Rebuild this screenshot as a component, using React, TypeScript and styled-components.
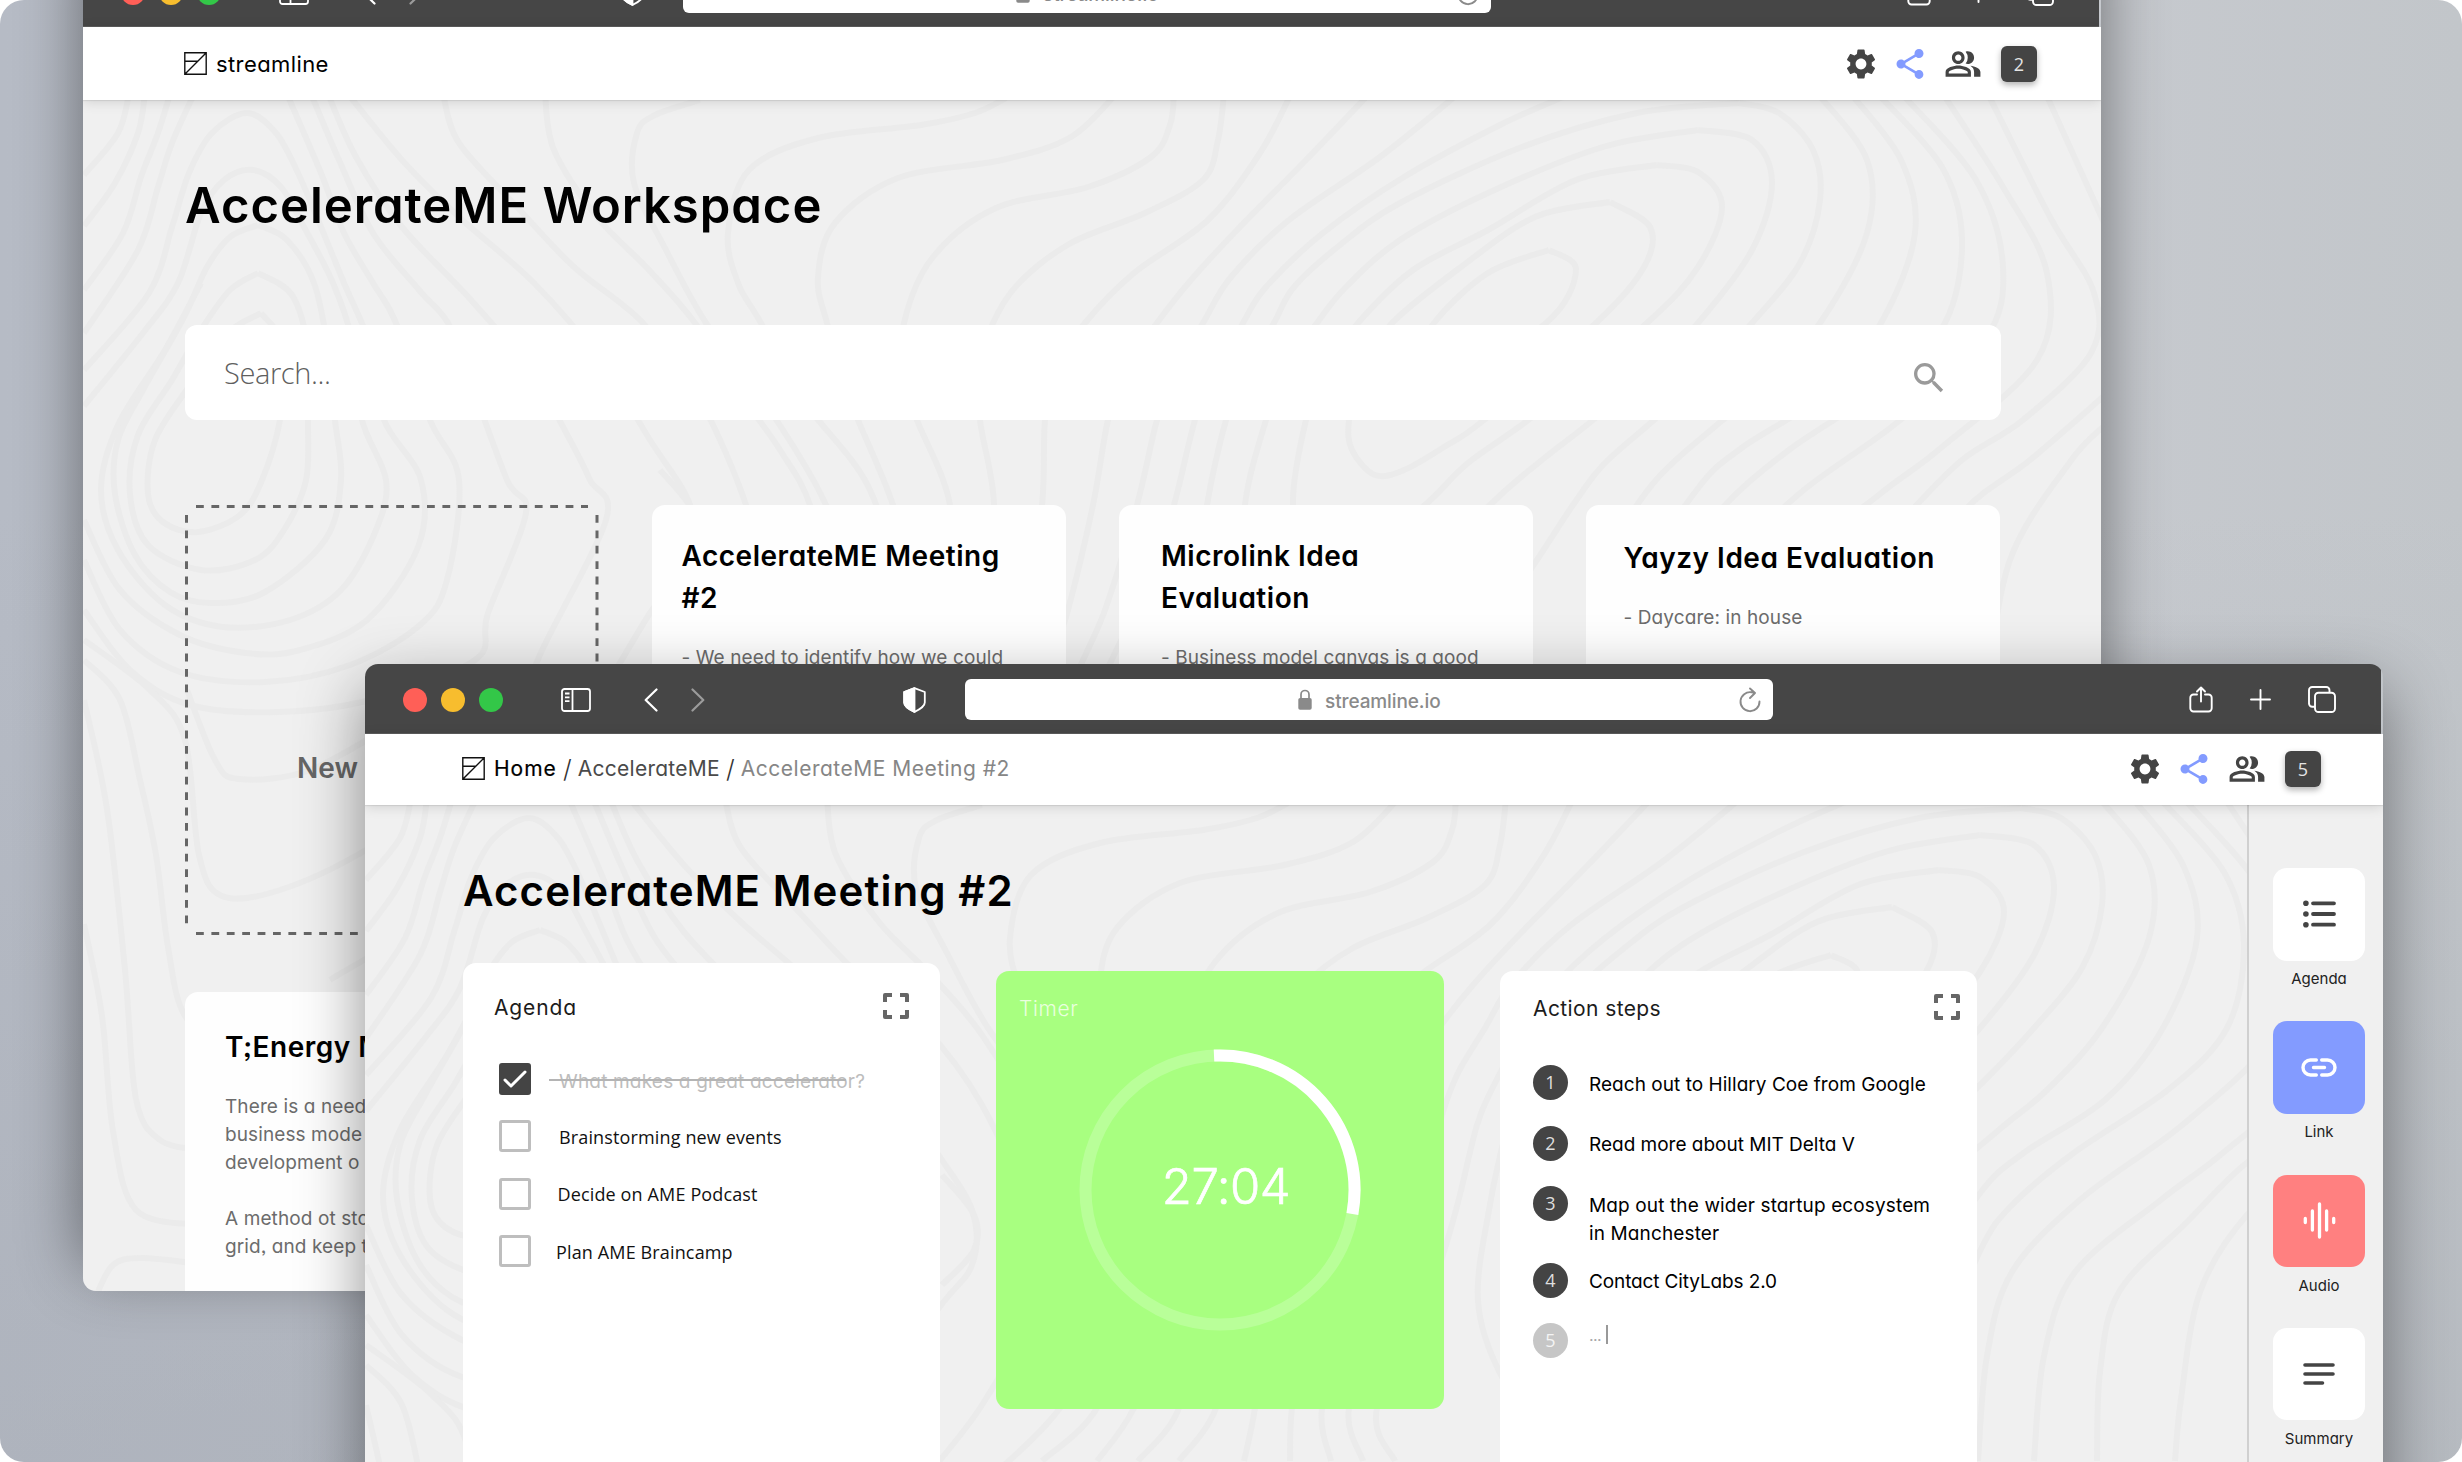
import React from "react";
import styled, { createGlobalStyle } from "styled-components";
import { MdSettings, MdShare, MdOutlinePeopleAlt, MdSearch } from "react-icons/md";

const ink = "#444444";
const canvas = "#f0f0f0";
const geometric = `Inter, "Open Sans", sans-serif`;
const humanist = `"Open Sans", "Noto Sans", sans-serif`;

const GlobalStyle = createGlobalStyle`
  body { margin: 0; background: #fff; }
  * { box-sizing: border-box; }
  h1, h2, h3, p, ul, ol { margin: 0; padding: 0; font-size: inherit; font-weight: inherit; }
  svg { display: block; flex: none; }
`;

/* ---------- desktop and windows ---------- */

const Desktop = styled.main`
  position: relative;
  width: 2462px;
  height: 1462px;
  overflow: hidden;
  border-radius: 24px;
  background:
    linear-gradient(180deg, transparent 35%, rgba(160, 165, 174, 0.35) 100%),
    linear-gradient(90deg, #b6bbc5 0%, #c6c9ce 86%, #c2c6ca 100%);
  font-family: ${geometric};
  font-feature-settings: "cv11", "ss03";
  color: #000;
`;

const WindowFrame = styled.section<{ $left: number; $top: number; $height: number; $shadow: string }>`
  position: absolute;
  left: ${(p) => p.$left}px;
  top: ${(p) => p.$top}px;
  width: 2018px;
  height: ${(p) => p.$height}px;
  display: flex;
  flex-direction: column;
  overflow: hidden;
  border-radius: 13px;
  box-shadow: ${(p) => p.$shadow};
`;

const Chrome = styled.div`
  flex: none;
  display: flex;
  align-items: center;
  width: 2016px;
  height: 70px;
  padding: 2px 0 0 38px;
  background: #464646;
  color: #fff;
  border-bottom: 1px solid #5c5c5c;
`;

const Lights = styled.div`
  display: flex;
  gap: 14px;
`;

const Light = styled.span<{ $color: string }>`
  width: 24px;
  height: 24px;
  border-radius: 50%;
  background: ${(p) => p.$color};
`;

const Glyph = styled.span<{ $before: number; $tone?: string }>`
  margin-left: ${(p) => p.$before}px;
  color: ${(p) => p.$tone ?? "#fff"};
`;

const AddressBar = styled.div`
  display: flex;
  align-items: center;
  width: 808px;
  height: 41px;
  margin-left: 39px;
  padding: 0 12px 0 333px;
  border-radius: 6px;
  background: #fff;
  color: #8a8a8a;
`;

const Address = styled.span`
  flex: 1;
  margin-left: 13px;
  padding-top: 3px;
  font-size: 19px;
  font-weight: 500;
  letter-spacing: -0.1px;
  font-feature-settings: normal;
`;

const AppHeader = styled.header<{ $height: number; $left: number; $right: number; $lift: number }>`
  position: relative;
  z-index: 1;
  flex: none;
  display: flex;
  align-items: center;
  height: ${(p) => p.$height}px;
  padding: 0 ${(p) => p.$right}px ${(p) => p.$lift}px ${(p) => p.$left}px;
  background: #fff;
  box-shadow: 0 2px 12px rgba(0, 0, 0, 0.13), 0 1px 1px rgba(0, 0, 0, 0.08);
`;

const BrandName = styled.span`
  flex: 1;
  margin-left: 9px;
  padding-top: 1px;
  font-size: 22px;
  letter-spacing: 0.4px;
`;

const Crumbs = styled.nav`
  flex: 1;
  display: flex;
  align-items: center;
  margin-left: 9px;
  padding-top: 1px;
  font-size: 21px;
  line-height: 30px;
`;

const Crumb = styled.span<{ $tone: string; $spacing?: number }>`
  color: ${(p) => p.$tone};
  letter-spacing: ${(p) => p.$spacing ?? 0.25}px;
`;

const HomeCrumb = styled(Crumb)`
  -webkit-text-stroke: 0.2px #000;
`;

const Slash = styled.span`
  width: 21px;
  text-align: center;
  font-size: 25px;
  font-weight: 300;
  color: #333;
`;

const Actions = styled.div`
  display: flex;
  align-items: center;
  color: ${ink};
`;

const Action = styled.span<{ $before?: number; $tone?: string }>`
  margin-left: ${(p) => p.$before ?? 0}px;
  color: ${(p) => p.$tone ?? ink};
`;

const CountBadge = styled.span`
  display: grid;
  place-items: center;
  width: 36px;
  height: 36px;
  margin-left: 19px;
  border-radius: 6px;
  background: ${ink};
  box-shadow: 0 3px 6px rgba(0, 0, 0, 0.3);
  color: #e4e4e4;
  font: 400 18px/36px ${humanist};
`;

const Body = styled.div`
  position: relative;
  flex: 1;
  min-height: 0;
  background: ${canvas};
`;

const TopoArt = styled.svg`
  position: absolute;
  left: 0;
  top: 0;
`;

/* ---------- workspace window ---------- */

const Workspace = styled.div`
  position: relative;
  padding: 76px 100px 0 102px;
`;

const WorkspaceTitle = styled.h1`
  font-size: 49px;
  font-weight: 600;
  line-height: 60px;
  letter-spacing: 0.98px;
`;

const SearchBox = styled.div`
  display: flex;
  align-items: center;
  height: 95px;
  margin-top: 89px;
  padding: 0 52px 0 39px;
  border-radius: 12px;
  background: #fff;
  color: #9a9a9a;
`;

const SearchHint = styled.span`
  flex: 1;
  font: 300 29px/40px ${humanist};
  letter-spacing: -0.4px;
  color: #5f5f5f;
`;

const SearchIcon = styled.span`
  margin-top: 10px;
`;

const CardGrid = styled.div`
  display: grid;
  grid-template-columns: repeat(4, 413.6px);
  grid-auto-rows: 430px;
  gap: 57px 53.4px;
  margin-top: 85px;
`;

const NewCard = styled.div`
  position: relative;
  padding: 242px 0 0 112px;
  color: #666;
  font-size: 28px;
  font-weight: 600;
  line-height: 42px;
`;

const DashedOutline = styled.svg`
  position: absolute;
  left: 0;
  top: 0;
`;

const Card = styled.article<{ $top: number; $left: number }>`
  padding: ${(p) => p.$top}px 0 0 ${(p) => p.$left}px;
  overflow: hidden;
  border-radius: 13px;
  background: #fefefe;
`;

const CardTitle = styled.h2`
  font-size: 28px;
  font-weight: 600;
  line-height: 42px;
  letter-spacing: 0.52px;
  white-space: pre;
`;

const CardText = styled.p`
  margin-top: 25px;
  font-size: 19px;
  line-height: 28px;
  letter-spacing: 0.1px;
  color: #6c6c6c;
  white-space: pre;
`;

/* ---------- meeting window ---------- */

const MeetingLayout = styled.div`
  position: relative;
  display: flex;
  height: 100%;
`;

const Meeting = styled.div`
  flex: 1;
  padding: 56px 0 0 98px;
`;

const MeetingTitle = styled.h1`
  font-size: 42px;
  font-weight: 600;
  line-height: 60px;
  letter-spacing: 1.1px;
`;

const Panels = styled.div`
  display: flex;
  align-items: flex-start;
  gap: 56px;
  margin-top: 42px;
`;

const Panel = styled.section<{ $width: number; $drop?: number; $pad: string }>`
  width: ${(p) => p.$width}px;
  height: 560px;
  margin-top: ${(p) => p.$drop ?? 0}px;
  padding: ${(p) => p.$pad};
  border-radius: 13px;
  background: #fff;
`;

const TimerPanel = styled(Panel)`
  height: 438px;
  background: #a8ff80;
  color: #fff;
`;

const PanelHead = styled.div<{ $indent?: number }>`
  display: flex;
  justify-content: space-between;
  height: 30px;
  padding-left: ${(p) => p.$indent ?? 0}px;
  font-size: 21px;
  line-height: 30px;
`;

const PanelTitle = styled.h3<{ $spacing: number; $tone?: string; $weight?: number }>`
  letter-spacing: ${(p) => p.$spacing}px;
  color: ${(p) => p.$tone ?? "#1c1c1c"};
  font-weight: ${(p) => p.$weight ?? 400};
`;

const Checklist = styled.ul`
  display: flex;
  flex-direction: column;
  gap: 25.6px;
  margin: 39.5px 0 0 4.5px;
  list-style: none;
`;

const CheckRow = styled.li`
  display: flex;
  align-items: center;
  height: 32px;
`;

const Box = styled.span<{ $checked?: boolean }>`
  display: grid;
  place-items: center;
  width: 32.5px;
  height: 32px;
  border: 3px solid ${(p) => (p.$checked ? ink : "#bebebe")};
  border-radius: 3px;
  background: ${(p) => (p.$checked ? ink : "#fff")};
`;

const CheckLabel = styled.span<{ $before: number }>`
  margin-left: ${(p) => p.$before}px;
  padding-top: 1px;
  font: 400 18px/28px ${humanist};
  letter-spacing: 0.14px;
  color: #111;
`;

const DoneLabel = styled.span`
  position: relative;
  margin-left: 28px;
  padding-top: 6px;
  font-size: 19px;
  line-height: 28px;
  letter-spacing: 0.18px;
  color: #bdbdbd;

  &::before {
    content: "";
    position: absolute;
    left: -10px;
    top: 17px;
    width: 297px;
    height: 2px;
    background: #b4b4b4;
  }
`;

const Dial = styled.div`
  display: grid;
  place-items: center;
  margin-top: 25px;

  & > * { grid-area: 1 / 1; }
`;

const Clock = styled.span`
  padding: 0 0 6px 12px;
  font-size: 49px;
  font-weight: 300;
  line-height: 60px;
  letter-spacing: -0.5px;
  -webkit-text-stroke: 0.7px #fff;
`;

const Steps = styled.ol`
  display: flex;
  flex-direction: column;
  gap: 15px;
  margin-top: 41.5px;
  list-style: none;
`;

const Step = styled.li`
  display: flex;
  align-items: flex-start;
  min-height: 45.5px;
`;

const StepNumber = styled.span<{ $muted?: boolean }>`
  display: grid;
  place-items: center;
  width: 35px;
  height: 35px;
  border-radius: 50%;
  background: ${(p) => (p.$muted ? "#c6c6c6" : ink)};
  color: ${(p) => (p.$muted ? "#f4f4f4" : "#dedede")};
  font: 400 18px/35px ${humanist};
`;

const StepText = styled.p<{ $spacing?: number }>`
  margin-left: 21px;
  padding-top: 5.5px;
  font-size: 19px;
  line-height: 28px;
  letter-spacing: ${(p) => p.$spacing ?? 0}px;
  white-space: pre;
`;

const Draft = styled.p`
  display: flex;
  align-items: flex-start;
  margin: -2px 0 0 21px;
  font-size: 16px;
  letter-spacing: -0.6px;
  line-height: 28px;
  color: #a8a8a8;
`;

const Caret = styled.span`
  width: 1.5px;
  height: 19px;
  margin: 4px 0 0 5px;
  background: #999;
`;

const ToolRail = styled.aside`
  flex: none;
  display: flex;
  flex-direction: column;
  align-items: center;
  gap: 32.3px;
  width: 136px;
  padding: 63px 0 0 6px;
  border-left: 2px solid #d0d0d0;
  background: ${canvas};
`;

const Tool = styled.div`
  display: flex;
  flex-direction: column;
  align-items: center;
  gap: 8.5px;
  font-size: 15px;
  line-height: 20px;
  color: #222;
`;

const Tile = styled.span<{ $fill: string; $tone: string }>`
  display: grid;
  place-items: center;
  width: 92.5px;
  height: 92.5px;
  border-radius: 14px;
  background: ${(p) => p.$fill};
  color: ${(p) => p.$tone};
`;

/* ---------- drawings ---------- */

type Line = number[];

// Contour lines of the backdrop, as flat x, y lists.
const contours: Line[] = [
  [129, 94, 118, 133, 84, 175],
  [145, 94, 138, 133, 115, 183, 84, 226],
  [170, 94, 158, 133, 141, 177, 123, 233, 84, 290],
  [194, 94, 172, 143, 158, 187, 138, 250, 84, 333],
  [84, 370, 149, 293, 172, 227, 189, 173, 212, 133, 247, 113, 276, 133, 298, 173, 321, 227, 344, 283, 372, 350, 384, 420, 421, 480, 418, 547, 367, 620, 300, 650, 246, 653, 180, 635, 120, 590, 84, 520],
  [84, 406, 143, 333, 178, 283, 201, 213, 224, 180, 253, 170, 281, 187, 304, 227, 333, 283, 352, 340, 362, 420, 386, 480, 376, 530, 341, 590, 290, 620, 223, 627, 165, 605, 118, 550, 101, 490, 118, 425, 165, 350, 201, 283],
  [258, 225, 230, 237, 207, 267, 184, 317, 143, 390, 118, 440, 115, 494, 135, 555, 170, 592, 211, 603, 265, 592, 325, 540, 341, 480, 335, 420, 328, 350, 314, 283, 287, 240, 258, 225],
  [258, 273, 230, 290, 201, 330, 172, 380, 138, 435, 130, 494, 148, 545, 201, 570, 255, 560, 284, 530, 306, 480, 308, 420, 308, 350, 292, 295, 258, 273],
  [261, 313, 225, 335, 190, 385, 155, 440, 148, 494, 163, 522, 198, 532, 240, 515, 262, 480, 280, 420, 286, 350, 261, 313],
  [84, 560, 120, 630, 180, 672, 265, 682, 350, 665, 420, 625, 447, 580, 459, 480, 430, 420, 396, 323, 373, 283, 344, 233, 321, 173, 287, 94],
  [84, 610, 130, 670, 190, 705, 278, 712, 370, 700, 475, 660, 488, 613, 526, 513, 507, 480, 470, 380, 448, 323, 419, 290, 373, 233, 339, 160, 311, 94],
  [84, 660, 120, 700, 140, 780, 156, 855, 168, 947, 185, 1016, 230, 1050],
  [328, 94, 356, 157, 402, 227, 471, 300, 530, 370, 570, 440, 590, 480, 606, 520, 539, 657, 500, 760, 366, 850, 280, 890, 222, 896, 199, 855, 185, 740, 150, 690, 84, 640],
  [348, 94, 402, 160, 459, 217, 534, 283, 600, 360, 650, 440, 690, 505, 690, 560, 650, 613, 560, 760, 450, 900, 330, 980],
  [443, 94, 459, 143, 517, 207, 574, 267, 643, 323, 700, 400, 746, 505, 760, 580, 700, 700, 620, 800],
  [545, 94, 554, 150, 597, 217, 649, 270, 695, 323, 745, 400, 780, 450, 810, 505, 830, 600, 778, 703, 700, 780],
  [700, 100, 655, 115, 637, 133, 634, 183, 666, 250, 706, 323, 760, 395, 826, 505, 852, 600, 815, 703, 760, 756],
  [1006, 98, 975, 113, 921, 125, 818, 138, 749, 170, 728, 233, 738, 283, 761, 323, 803, 400, 870, 490, 893, 600, 852, 703, 815, 756],
  [1116, 94, 1071, 137, 1002, 160, 898, 178, 835, 223, 818, 277, 827, 323, 850, 400, 893, 505, 915, 600, 897, 703, 856, 756],
  [1174, 94, 1170, 125, 1151, 157, 1088, 187, 996, 208, 933, 257, 904, 323, 904, 380, 917, 420, 950, 505, 950, 610, 934, 703, 897, 756],
  [1224, 94, 1218, 140, 1203, 180, 1145, 213, 1071, 243, 1019, 283, 993, 323, 980, 370, 980, 420, 994, 505, 985, 610, 973, 703, 962, 756],
  [1291, 94, 1260, 153, 1208, 220, 1134, 273, 1085, 323, 1055, 370, 1045, 420, 1042, 505, 1025, 610, 1010, 703, 1008, 756],
  [1369, 94, 1306, 160, 1237, 230, 1191, 280, 1157, 323, 1125, 370, 1108, 420, 1093, 505, 1068, 610, 1040, 703, 1049, 756],
  [1458, 94, 1380, 157, 1289, 220, 1231, 277, 1203, 323, 1175, 370, 1157, 420, 1137, 505, 1105, 610, 1067, 703, 1081, 756],
  [1570, 94, 1500, 125, 1404, 177, 1323, 233, 1266, 287, 1243, 323, 1212, 380, 1195, 420, 1174, 505, 1150, 580, 1095, 703, 1113, 756],
  [1739, 103, 1637, 113, 1522, 147, 1400, 203, 1340, 245, 1294, 287, 1274, 323, 1242, 380, 1226, 420, 1207, 505, 1196, 596, 1219, 670, 1260, 720],
  [1739, 103, 1779, 113, 1813, 150, 1820, 200, 1800, 263, 1752, 323, 1700, 378, 1654, 420, 1603, 465, 1573, 505, 1500, 610, 1420, 670],
  [1698, 130, 1603, 147, 1488, 193, 1400, 240, 1346, 287, 1317, 323, 1285, 370, 1266, 420, 1245, 505, 1248, 600, 1300, 660, 1400, 600, 1490, 505, 1542, 460, 1593, 420, 1650, 370, 1698, 323, 1752, 250, 1772, 183, 1752, 140, 1698, 130],
  [1657, 165, 1576, 180, 1488, 230, 1413, 270, 1358, 323, 1325, 370, 1306, 420, 1293, 505, 1310, 570, 1350, 565, 1425, 505, 1468, 463, 1535, 415, 1647, 323, 1698, 267, 1722, 207, 1698, 172, 1657, 165],
  [1610, 202, 1535, 217, 1461, 267, 1392, 323, 1360, 370, 1349, 420, 1352, 450, 1375, 475, 1404, 470, 1444, 447, 1484, 420, 1596, 323, 1644, 267, 1650, 227, 1610, 202],
  [1549, 250, 1488, 273, 1434, 323, 1412, 370, 1440, 385, 1546, 323, 1576, 270, 1549, 250],
  [1818, 94, 1867, 160, 1867, 233, 1820, 323, 1765, 385, 1718, 424, 1656, 480, 1600, 560],
  [1851, 94, 1901, 160, 1915, 233, 1881, 323, 1824, 394, 1743, 447, 1699, 487, 1640, 580, 1600, 700],
  [1878, 94, 1942, 167, 1962, 240, 1945, 323, 1887, 384, 1793, 447, 1730, 500, 1699, 544, 1660, 640],
  [1902, 94, 1976, 180, 2003, 267, 1985, 340, 1899, 421, 1799, 494, 1730, 567, 1705, 651, 1696, 756],
  [1943, 94, 2003, 187, 2047, 273, 2037, 360, 1942, 447, 1880, 494, 1793, 567, 1762, 651, 1752, 756],
  [1988, 94, 2050, 217, 2094, 293, 2091, 353, 2023, 420, 1962, 460, 1905, 517, 1837, 587, 1818, 667, 1815, 756],
  [2046, 94, 2105, 225],
  [2105, 395, 2030, 460, 1965, 510, 1918, 587, 1899, 694, 1893, 756],
  [2105, 425, 2070, 462, 2010, 560, 1985, 700],
  [660, 470, 692, 510, 692, 545, 660, 580],
  [84, 700, 107, 809, 125, 970, 136, 1099, 160, 1140, 200, 1150],
  [84, 924, 102, 1016, 113, 1131, 136, 1210, 200, 1225],
  [96, 1296, 113, 1265, 142, 1258, 200, 1264],
  [187, 690, 215, 760, 239, 779, 310, 770, 400, 720],
];

function smooth(line: Line): string {
  const at = (i: number) => {
    const k = Math.max(0, Math.min(line.length / 2 - 1, i)) * 2;
    return [line[k], line[k + 1]];
  };
  let d = `M${line[0]} ${line[1]}`;
  for (let i = 0; i < line.length / 2 - 1; i++) {
    const [a, b, c, e] = [at(i - 1), at(i), at(i + 1), at(i + 2)];
    d += `C${b[0] + (c[0] - a[0]) / 6} ${b[1] + (c[1] - a[1]) / 6} ${c[0] - (e[0] - b[0]) / 6} ${c[1] - (e[1] - b[1]) / 6} ${c[0]} ${c[1]}`;
  }
  return d;
}

const Topo = () => (
  <TopoArt width="2018" height="1191" viewBox="83 100 2018 1191" fill="none" stroke="#ebebeb" strokeWidth="6">
    {contours.map((line, i) => (
      <path key={i} d={smooth(line)} />
    ))}
  </TopoArt>
);

const Logo = () => (
  <svg width="23" height="23" viewBox="0 0 23 23" fill="none" stroke="#111" strokeWidth="1.4">
    <path d="M.8 .8h21.4v21.4H.8zM1 22 22 1M1 9.3h13" />
  </svg>
);

const SidebarIcon = () => (
  <svg width="30" height="24" viewBox="0 0 30 24" fill="none" stroke="currentColor" strokeWidth="1.8">
    <rect x="1" y="1" width="28" height="22" rx="2.5" />
    <path d="M11.5 1v22M4 5.5h4.5M4 9.3h4.5M4 13.1h4.5" />
  </svg>
);

const Chevron = ({ forward }: { forward?: boolean }) => (
  <svg width="14" height="24" viewBox="0 0 14 24" fill="none" stroke="currentColor" strokeWidth="2.2" strokeLinecap="round" strokeLinejoin="round">
    <path d={forward ? "M1.5 1.5 12.3 12 1.5 22.5" : "M12.5 1.5 1.7 12l10.8 10.5"} />
  </svg>
);

const ShieldIcon = () => (
  <svg width="23" height="26" viewBox="0 0 23 26" fill="none" stroke="currentColor" strokeWidth="1.8" strokeLinejoin="round">
    <path d="M11.5 1.2 21.8 5v10.500c0 3-5 7-10.300 9.400C6.200 22.500 1.200 18.500 1.200 15.500V5z" />
    <path d="M11.5 1.200V24.900C6.200 22.500 1.200 18.500 1.200 15.500V5z" fill="currentColor" />
  </svg>
);

const LockIcon = () => (
  <svg width="14" height="21" viewBox="0 0 14 21">
    <path d="M3 10V5.500a4 4 0 0 1 8 0V10" fill="none" stroke="currentColor" strokeWidth="1.700" />
    <rect x=".3" y="9" width="13.400" height="11.700" rx="1.800" fill="currentColor" />
  </svg>
);

const ReloadIcon = () => (
  <svg width="22" height="26" viewBox="0 0 22 26" fill="none" stroke="currentColor" strokeWidth="1.900" strokeLinecap="round" strokeLinejoin="round">
    <path d="M20.500 14.500a9.500 9.500 0 1 1-8-9.200l3.500.6M11 1.500l5 4.500-5 5" />
  </svg>
);

const ExportIcon = () => (
  <svg width="24" height="27" viewBox="0 0 24 27" fill="none" stroke="currentColor" strokeWidth="1.900" strokeLinecap="round" strokeLinejoin="round">
    <path d="M8 8.500H4.500a3.200 3.200 0 0 0-3.200 3.200v10.600a3.200 3.200 0 0 0 3.200 3.200h15a3.200 3.200 0 0 0 3.200-3.200V11.700a3.200 3.200 0 0 0-3.200-3.200H16M12 15.500V1.700M8 5.500l4-4 4 4" />
  </svg>
);

const PlusIcon = () => (
  <svg width="21" height="21" viewBox="0 0 21 21" stroke="currentColor" strokeWidth="1.900" strokeLinecap="round">
    <path d="M10.500 1v19M1 10.500h19" />
  </svg>
);

const TabsIcon = () => (
  <svg width="28" height="27" viewBox="0 0 28 27" fill="none" stroke="currentColor" strokeWidth="1.900">
    <rect x="7" y="6.700" width="20" height="19.300" rx="3.500" />
    <path d="M21.500 6.700V4.200A3.200 3.200 0 0 0 18.300 1H4.200A3.200 3.200 0 0 0 1 4.200v13.300a3.200 3.200 0 0 0 3.200 3.200H7" />
  </svg>
);

const ExpandIcon = () => (
  <svg width="26" height="26" viewBox="0 0 26 26" fill="none" stroke="#666" strokeWidth="4" strokeLinejoin="round">
    <path d="M2 9V2h7M17 2h7v7M24 17v7h-7M9 24H2v-7" />
  </svg>
);

const CheckIcon = () => (
  <svg width="24" height="18" viewBox="0 0 24 18" fill="none" stroke="#fff" strokeWidth="3" strokeLinecap="round" strokeLinejoin="round">
    <path d="M2 10l6 6L22 2" />
  </svg>
);

const ListIcon = () => (
  <svg width="33" height="28" viewBox="0 0 33 28" fill="currentColor" stroke="currentColor" strokeLinecap="round">
    <path d="M10 3.300h21M10 14h21M10 24.700h21" strokeWidth="3.800" />
    <path d="M2.900 3.300h.01M2.900 14h.01M2.900 24.700h.01" strokeWidth="5.600" />
  </svg>
);

const LinkIcon = () => (
  <svg width="36" height="19" viewBox="0 0 36 19" fill="none" stroke="currentColor" strokeWidth="3.400" strokeLinecap="round">
    <path d="M15.300 2H9.500a7.500 7.500 0 0 0 0 15h5.800M20.700 2h5.800a7.500 7.500 0 0 1 0 15h-5.800M12.500 9.500h11" />
  </svg>
);

const AudioIcon = () => (
  <svg width="33" height="37" viewBox="0 0 33 37" fill="none" stroke="currentColor" strokeWidth="3.300" strokeLinecap="round">
    <path d="M2.300 16.500v4M9.400 9v19M16.500 2v33M23.600 9v19M30.700 16.500v4" />
  </svg>
);

const NotesIcon = () => (
  <svg width="32" height="22" viewBox="0 0 32 22" fill="none" stroke="currentColor" strokeWidth="3.600" strokeLinecap="round">
    <path d="M2 2h28M2 11h28M2 20h17.500" />
  </svg>
);

const TimerRing = () => (
  <svg width="282" height="282" viewBox="-141 -141 282 282" fill="none" strokeWidth="12">
    <circle r="134.500" stroke="#fff" strokeOpacity=".2" />
    <path d="M-6 -134.400A134.500 134.500 0 0 1 132.400 24" stroke="#fff" />
  </svg>
);

/* ---------- composition ---------- */

const BrowserChrome = () => (
  <Chrome>
    <Lights>
      <Light $color="#ff5f57" />
      <Light $color="#f7bd2e" />
      <Light $color="#33c748" />
    </Lights>
    <Glyph $before={58}><SidebarIcon /></Glyph>
    <Glyph $before={53}><Chevron /></Glyph>
    <Glyph $before={33} $tone="#9b9b9b"><Chevron forward /></Glyph>
    <Glyph $before={198}><ShieldIcon /></Glyph>
    <AddressBar>
      <LockIcon />
      <Address>streamline.io</Address>
      <ReloadIcon />
    </AddressBar>
    <Glyph $before={416}><ExportIcon /></Glyph>
    <Glyph $before={37}><PlusIcon /></Glyph>
    <Glyph $before={37}><TabsIcon /></Glyph>
  </Chrome>
);

const HeaderActions = ({ count }: { count: number }) => (
  <Actions>
    <Action><MdSettings size={36} /></Action>
    <Action $before={13} $tone="#839bff"><MdShare size={36} /></Action>
    <Action $before={16}><MdOutlinePeopleAlt size={38} /></Action>
    <CountBadge>{count}</CountBadge>
  </Actions>
);

const notes = [
  { top: 30, left: 29.5, title: "AccelerateME Meeting\n#2", text: "- We need to identify how we could" },
  { top: 30, left: 42, title: "Microlink Idea\nEvaluation", text: "- Business model canvas is a good" },
  { top: 31.5, left: 37.5, title: "Yayzy Idea Evaluation", text: "- Daycare: in house" },
  { top: 34, left: 40, title: "T;Energy M", text: "There is a need\nbusiness mode\ndevelopment o\n\nA method ot sto\ngrid, and keep t" },
];

const steps = [
  { text: "Reach out to Hillary Coe from Google", spacing: 0.04 },
  { text: "Read more about MIT Delta V", spacing: -0.01 },
  { text: "Map out the wider startup ecosystem\nin Manchester", spacing: 0.13 },
  { text: "Contact CityLabs 2.0", spacing: -0.12 },
];

const agenda = [
  { text: "Brainstorming new events", before: 28 },
  { text: "Decide on AME Podcast", before: 26.5 },
  { text: "Plan AME Braincamp", before: 25 },
];

const tools = [
  { label: "Agenda", fill: "#fff", tone: ink, icon: <ListIcon /> },
  { label: "Link", fill: "#839bff", tone: "#fff", icon: <LinkIcon /> },
  { label: "Audio", fill: "#ff8080", tone: "#fff", icon: <AudioIcon /> },
  { label: "Summary", fill: "#fff", tone: ink, icon: <NotesIcon /> },
];

const WorkspaceWindow = () => (
  <WindowFrame $left={83} $top={-43} $height={1334} $shadow="0 -22px 64px rgba(0,0,0,.46)">
    <BrowserChrome />
    <AppHeader $height={73} $left={101} $right={64} $lift={0}>
      <Logo />
      <BrandName>streamline</BrandName>
      <HeaderActions count={2} />
    </AppHeader>
    <Body>
      <Topo />
      <Workspace>
        <WorkspaceTitle>AccelerateME Workspace</WorkspaceTitle>
        <SearchBox>
          <SearchHint>Search...</SearchHint>
          <SearchIcon><MdSearch size={40} /></SearchIcon>
        </SearchBox>
        <CardGrid>
          <NewCard>
            <DashedOutline width="414" height="430" viewBox="0 0 414 430" fill="none" stroke="#666" strokeWidth="3" strokeDasharray="7.800 7.600">
              <path d="M11 1.500H403M1.500 10V419M412 10V419M11 428.500H403" />
            </DashedOutline>
            New
          </NewCard>
          {notes.map((n) => (
            <Card key={n.title} $top={n.top} $left={n.left}>
              <CardTitle>{n.title}</CardTitle>
              <CardText>{n.text}</CardText>
            </Card>
          ))}
        </CardGrid>
      </Workspace>
    </Body>
  </WindowFrame>
);

const MeetingWindow = () => (
  <WindowFrame $left={365} $top={664} $height={1000} $shadow="0 24px 66px rgba(0,0,0,.44)">
    <BrowserChrome />
    <AppHeader $height={71} $left={97} $right={62} $lift={2}>
      <Logo />
      <Crumbs>
        <HomeCrumb $tone="#000" $spacing={1}>Home</HomeCrumb>
        <Slash>/</Slash>
        <Crumb $tone="#4a4a4a">AccelerateME</Crumb>
        <Slash>/</Slash>
        <Crumb $tone="#868686" $spacing={0.5}>AccelerateME Meeting #2</Crumb>
      </Crumbs>
      <HeaderActions count={5} />
    </AppHeader>
    <Body>
      <Topo />
      <MeetingLayout>
        <Meeting>
          <MeetingTitle>AccelerateME Meeting #2</MeetingTitle>
          <Panels>
            <Panel $width={477} $pad="30px 31px 0 31px">
              <PanelHead>
                <PanelTitle $spacing={0.85}>Agenda</PanelTitle>
                <ExpandIcon />
              </PanelHead>
              <Checklist>
                <CheckRow>
                  <Box $checked><CheckIcon /></Box>
                  <DoneLabel>What makes a great accelerator?</DoneLabel>
                </CheckRow>
                {agenda.map((a) => (
                  <CheckRow key={a.text}>
                    <Box />
                    <CheckLabel $before={a.before}>{a.text}</CheckLabel>
                  </CheckRow>
                ))}
              </Checklist>
            </Panel>
            <TimerPanel $width={448} $drop={7.5} $pad="23px 0 0">
              <PanelHead $indent={23}>
                <PanelTitle $spacing={0.6} $tone="#eaffdf" $weight={300}>Timer</PanelTitle>
              </PanelHead>
              <Dial>
                <TimerRing />
                <Clock>27:04</Clock>
              </Dial>
            </TimerPanel>
            <Panel $width={477} $drop={7.5} $pad="23px 17.5px 0 33px">
              <PanelHead>
                <PanelTitle $spacing={0.4}>Action steps</PanelTitle>
                <ExpandIcon />
              </PanelHead>
              <Steps>
                {steps.map((s, i) => (
                  <Step key={s.text}>
                    <StepNumber>{i + 1}</StepNumber>
                    <StepText $spacing={s.spacing}>{s.text}</StepText>
                  </Step>
                ))}
                <Step>
                  <StepNumber $muted>5</StepNumber>
                  <Draft>...<Caret /></Draft>
                </Step>
              </Steps>
            </Panel>
          </Panels>
        </Meeting>
        <ToolRail>
          {tools.map((t) => (
            <Tool key={t.label}>
              <Tile $fill={t.fill} $tone={t.tone}>{t.icon}</Tile>
              {t.label}
            </Tool>
          ))}
        </ToolRail>
      </MeetingLayout>
    </Body>
  </WindowFrame>
);

export default function App() {
  return (
    <>
      <GlobalStyle />
      <Desktop>
        <WorkspaceWindow />
        <MeetingWindow />
      </Desktop>
    </>
  );
}
